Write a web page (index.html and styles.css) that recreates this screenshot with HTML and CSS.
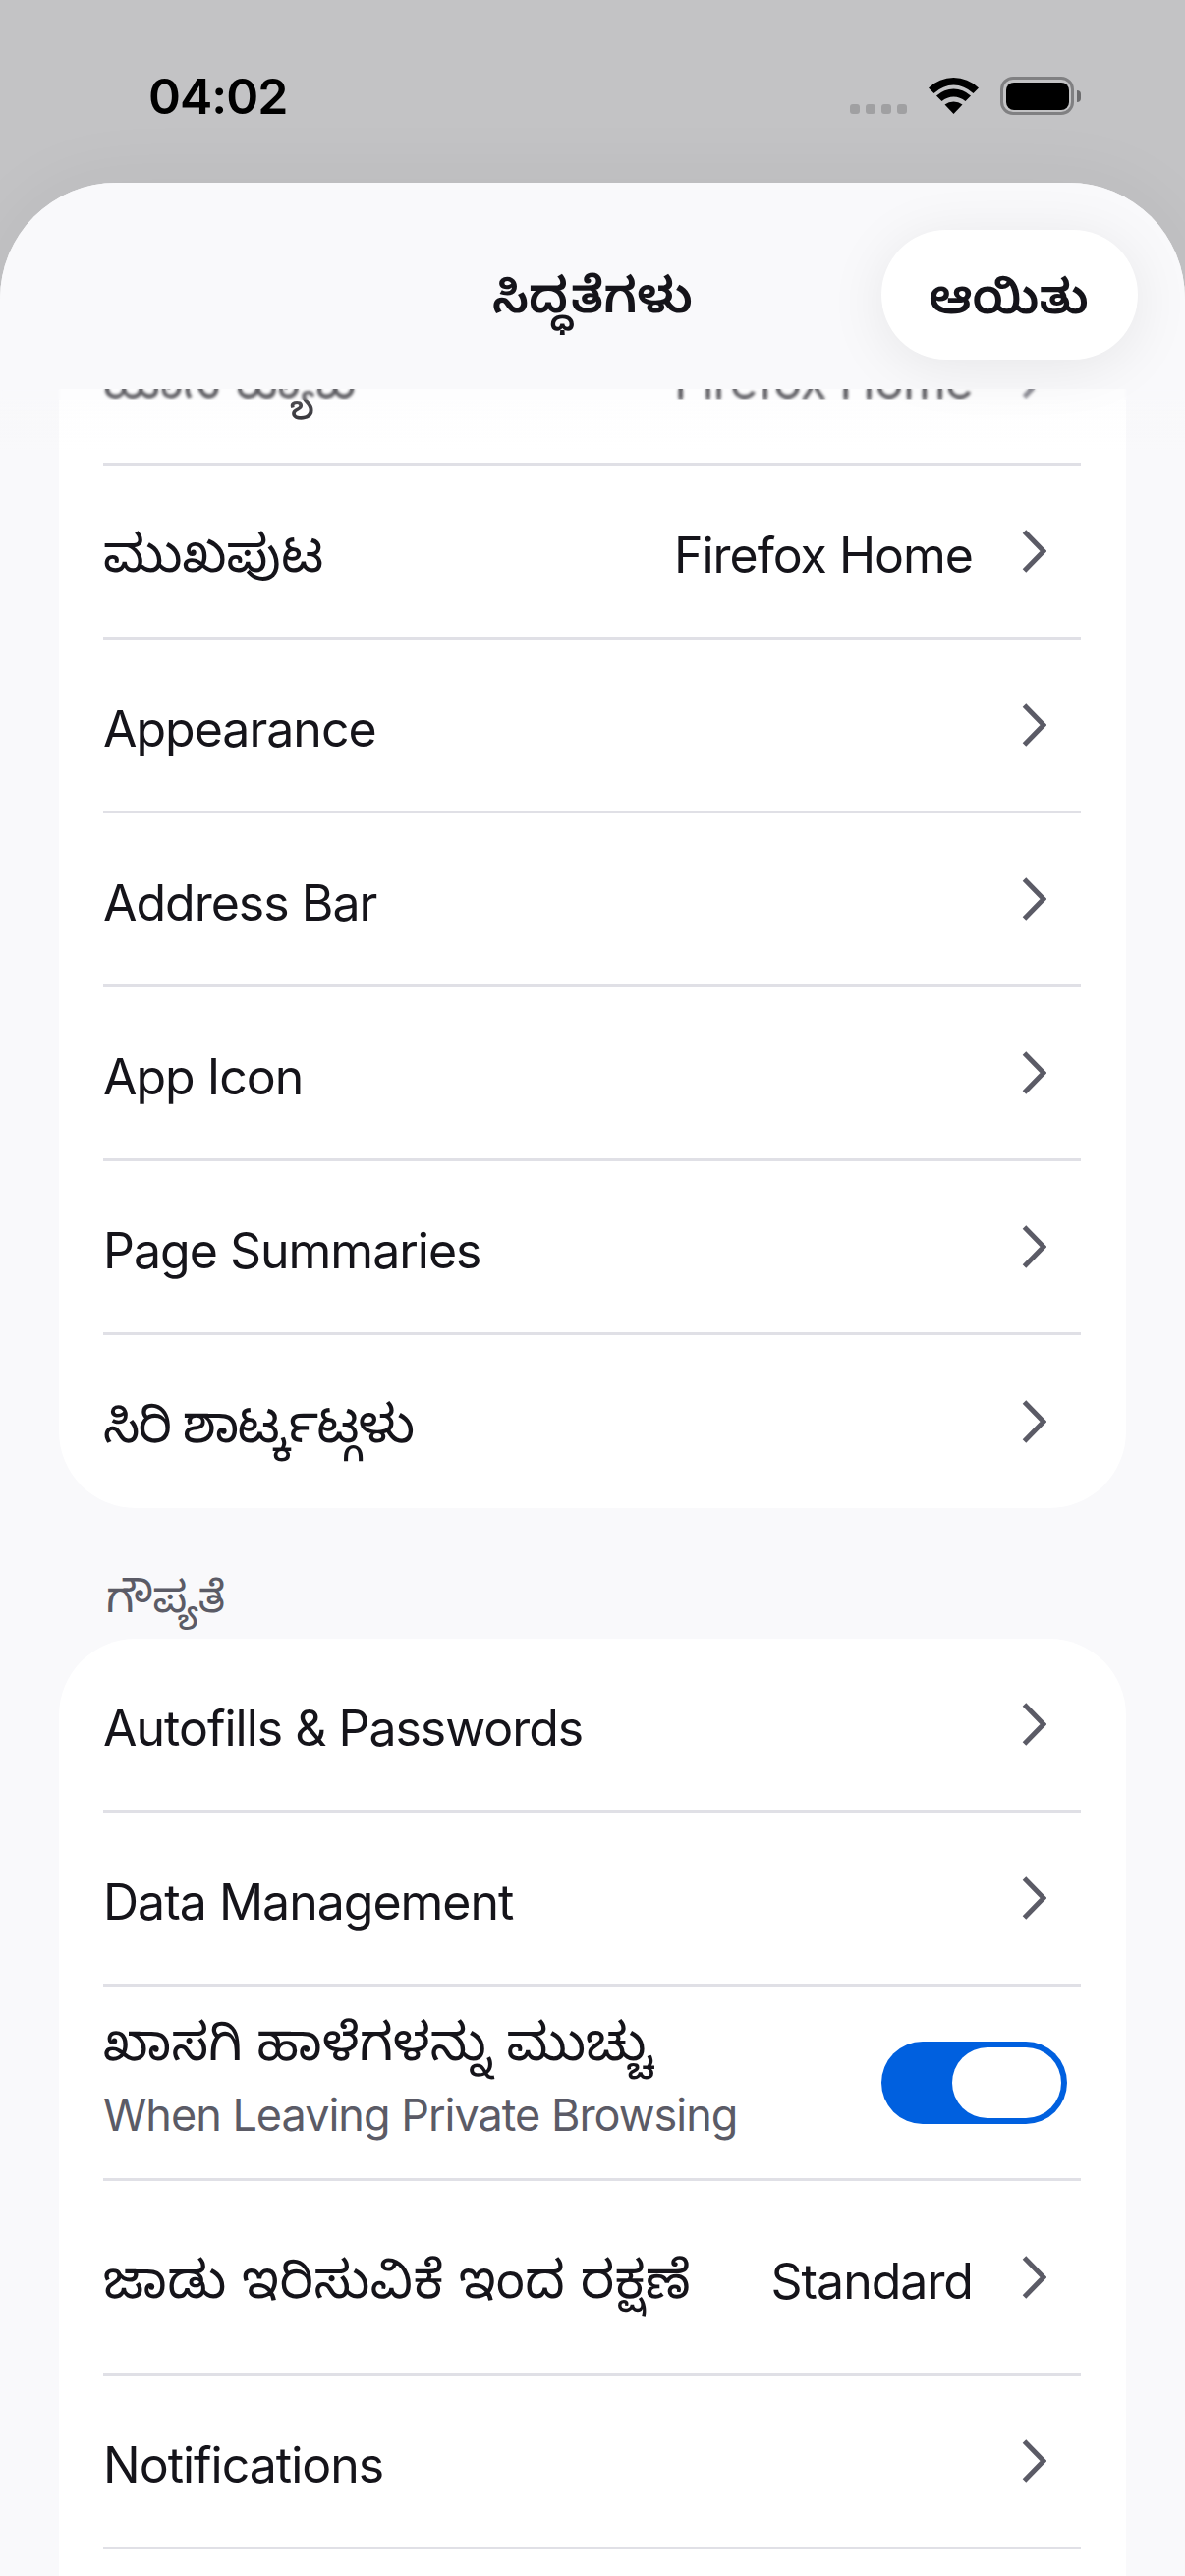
FILE: index.html
```html
<!DOCTYPE html>
<html lang="kn">
<head>
<meta charset="utf-8">
<title>ಸಿದ್ಧತೆಗಳು</title>
<link rel="stylesheet" href="styles.css">
</head>
<body>
<div class="status">
  <span class="time">04:02</span>
  <div class="status-icons">
    <div class="dots"><i></i><i></i><i></i><i></i></div>
    <svg class="wifi" width="51" height="37" viewBox="0 0 51 37"><path d="M0 10.5Q11 0 25.5 0T51 10.5L45.5 16Q36 7.5 25.5 7.5T5.500 16Z"/><path d="M8 18.500Q16 11.500 25.500 11.500T43 18.500L37.500 24Q32 19.500 25.500 19.500T13.500 24Z"/><path d="M16.500 27.500Q20.500 24.500 25.500 24.500T34.500 27.500L25.500 37Z"/></svg>
    <div class="battery"><div class="battery-body"><div class="battery-fill"></div></div><div class="battery-nub"></div></div>
  </div>
</div>
<main class="sheet">
  <header class="nav">
    <h1 class="nav-title">ಸಿದ್ಧತೆಗಳು</h1>
    <button class="done"><span class="done-text">ಆಯಿತು</span></button>
  </header>
  <div class="nav-fade"></div>
  <div class="scroll">
    <section class="card">
      <div class="row"><span class="label kn">ಹೊಸ ಟ್ಯಾಬ್</span><span class="value">Firefox Home</span><svg class="chev" viewBox="0 0 25 44"><path d="M2.500 2 22 22 2.500 42"/></svg></div>
      <div class="row"><span class="label kn">ಮುಖಪುಟ</span><span class="value">Firefox Home</span><svg class="chev" viewBox="0 0 25 44"><path d="M2.500 2 22 22 2.500 42"/></svg></div>
      <div class="row"><span class="label">Appearance</span><svg class="chev" viewBox="0 0 25 44"><path d="M2.500 2 22 22 2.500 42"/></svg></div>
      <div class="row"><span class="label">Address Bar</span><svg class="chev" viewBox="0 0 25 44"><path d="M2.500 2 22 22 2.500 42"/></svg></div>
      <div class="row"><span class="label">App Icon</span><svg class="chev" viewBox="0 0 25 44"><path d="M2.500 2 22 22 2.500 42"/></svg></div>
      <div class="row"><span class="label">Page Summaries</span><svg class="chev" viewBox="0 0 25 44"><path d="M2.500 2 22 22 2.500 42"/></svg></div>
      <div class="row row-last"><span class="label kn kn-tight">ಸಿರಿ ಶಾರ್ಟ್ಕಟ್ಗಳು</span><svg class="chev" viewBox="0 0 25 44"><path d="M2.500 2 22 22 2.500 42"/></svg></div>
    </section>
    <h2 class="section-title">ಗೌಪ್ಯತೆ</h2>
    <section class="card card-open">
      <div class="row"><span class="label">Autofills &amp; Passwords</span><svg class="chev" viewBox="0 0 25 44"><path d="M2.500 2 22 22 2.500 42"/></svg></div>
      <div class="row"><span class="label">Data Management</span><svg class="chev" viewBox="0 0 25 44"><path d="M2.500 2 22 22 2.500 42"/></svg></div>
      <div class="row row-tall row-toggle">
        <div class="stack"><span class="label kn kn-top">ಖಾಸಗಿ ಹಾಳೆಗಳನ್ನು ಮುಚ್ಚು</span><span class="sub">When Leaving Private Browsing</span></div>
        <div class="toggle"><div class="knob"></div></div>
      </div>
      <div class="row row-tall"><span class="label kn kn-wide">ಜಾಡು ಇರಿಸುವಿಕೆ ಇಂದ ರಕ್ಷಣೆ</span><span class="value">Standard</span><svg class="chev" viewBox="0 0 25 44"><path d="M2.500 2 22 22 2.500 42"/></svg></div>
      <div class="row"><span class="label">Notifications</span><svg class="chev" viewBox="0 0 25 44"><path d="M2.500 2 22 22 2.500 42"/></svg></div>
    </section>
  </div>
</main>
</body>
</html>
```
FILE: styles.css
```css
* { box-sizing: border-box; }
html, body { margin: 0; height: 2622px; overflow: hidden; }
body {
  width: 1206px;
  background: #c3c3c5;
  font-family: Inter, "Noto Sans Kannada", "Noto Sans", sans-serif;
  color: #15141a;
  display: flex;
  flex-direction: column;
}
.status {
  height: 186px;
  flex: none;
  display: flex;
  justify-content: space-between;
  padding: 68px 106px 0 151px;
}
.time { font-size: 50px; font-weight: 600; line-height: 60px; color: #000; letter-spacing: -1px; }
.status-icons { display: flex; align-items: flex-start; padding-top: 10px; }
.dots { display: flex; gap: 6px; margin-top: 28px; }
.dots i { width: 10px; height: 10px; border-radius: 3px; background: #a0a0a2; }
.wifi { margin-left: 22px; margin-top: 1px; fill: #000; }
.battery { display: flex; align-items: center; margin-left: 22px; }
.battery-body {
  width: 75px; height: 39px; border: 3.500px solid #808082; border-radius: 13px; padding: 2.500px;
}
.battery-fill { width: 100%; height: 100%; background: #000; border-radius: 8px; }
.battery-nub { width: 4px; height: 12px; margin-left: 3px; background: #6c6c6e; border-radius: 0 6px 6px 0; }

.sheet {
  position: relative;
  flex: 1;
  min-height: 0;
  background: #f9f9fb;
  border-radius: 118px 118px 0 0;
  box-shadow: 0 0 80px rgba(0,0,0,.05);
  overflow: hidden;
}
.nav {
  position: absolute;
  left: 0; right: 0; top: 0;
  z-index: 2;
  height: 210px;
  background: #f9f9fb;
  display: flex;
  align-items: center;
  justify-content: center;
}
.nav-title { margin: 0; padding-top: 32px; font-size: 50px; font-weight: 600; }
.done {
  position: absolute;
  right: 48px; top: 48px;
  width: 261px; height: 132px;
  border: 0;
  border-radius: 66px;
  background: #fff;
  box-shadow: 0 8px 60px rgba(0,0,0,.08);
  color: inherit;
  padding: 16px 2px 0 0;
  font: 600 49px Inter, "Noto Sans Kannada", "Noto Sans", sans-serif;
}
.nav-fade {
  position: absolute;
  left: 0; right: 0; top: 210px;
  z-index: 1;
  height: 11px;
  backdrop-filter: blur(1.500px);
  background: rgba(249,249,251,.3);
}
.nav-fade::after {
  content: "";
  position: absolute;
  left: 0; right: 0; top: 11px;
  height: 50px;
  background: linear-gradient(180deg, rgba(249,249,251,.25), rgba(249,249,251,0));
}
.scroll { padding: 111px 60px 0; }
.card { background: #fff; border-radius: 78px; padding-left: 45px; padding-right: 46px; }
.card-open { border-radius: 78px 78px 0 0; padding-bottom: 120px; }
.row {
  height: 177px;
  display: flex;
  align-items: center;
  border-bottom: 3px solid #e0e0e6;
  padding-right: 35px;
}
.row-last { height: 176px; border-bottom: 0; }
.row-tall { height: 198px; }
.label { font-size: 50px; flex: 1; white-space: nowrap; letter-spacing: -1px; padding-top: 8px; }
.kn { font-size: 53px; letter-spacing: 0; padding-top: 20px; }
.kn-tight { letter-spacing: -1.800px; }
.kn-wide { letter-spacing: .500px; }
.value { font-size: 50px; margin-right: 50px; white-space: nowrap; letter-spacing: -1px; padding-top: 8px; }
.chev { width: 25px; height: 44px; flex: none; fill: none; stroke: #5b5b66; stroke-width: 5; }
.section-title {
  margin: 0;
  height: 133px;
  padding: 62px 0 0 48px;
  font-size: 44px;
  line-height: 56px;
  font-weight: 400;
  color: #5b5b66;
}
.stack { flex: 1; display: flex; flex-direction: column; gap: 16px; padding-bottom: 5px; }
.stack .label { flex: none; line-height: 62px; }
.stack .kn-top { padding-top: 0; margin-top: -6px; letter-spacing: .100px; }
.sub { font-size: 45px; line-height: 56px; color: #5b5b66; white-space: nowrap; letter-spacing: -1px; }
.row-toggle { padding-right: 14px; }
.toggle {
  width: 189px; height: 84px; flex: none;
  background: #0060df; border-radius: 42px;
  display: flex; justify-content: flex-end; align-items: center; padding-right: 6px;
}
.knob { width: 111px; height: 72px; border-radius: 36px; background: #fff; }
```
